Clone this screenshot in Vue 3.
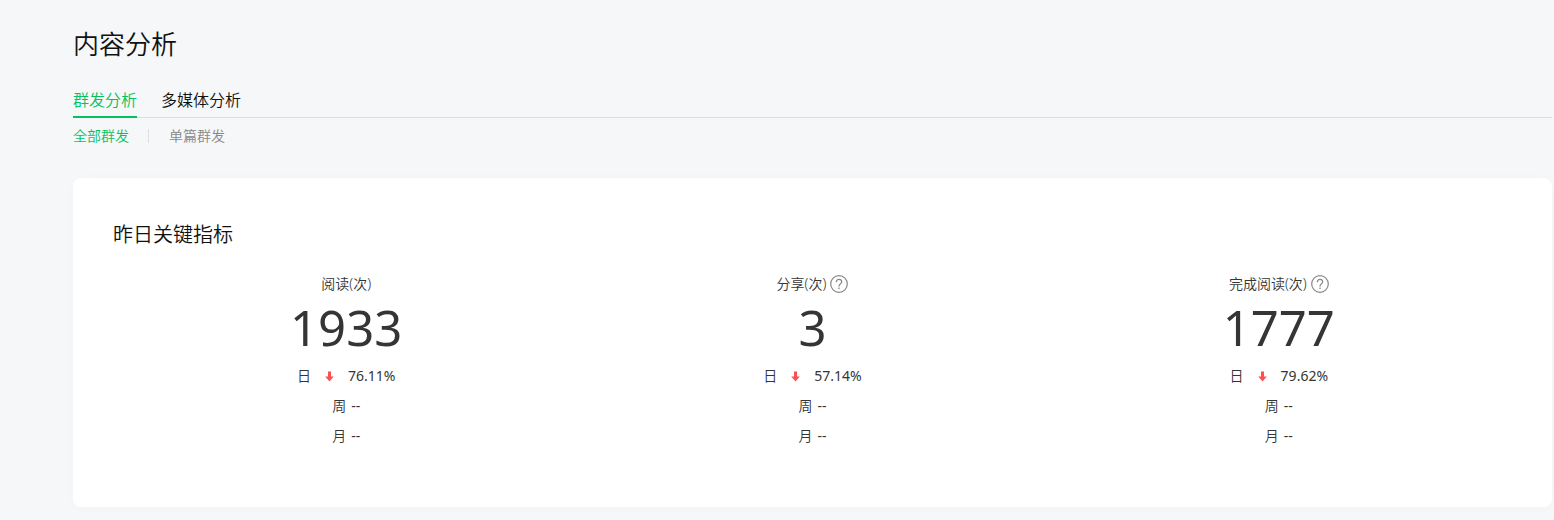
<script setup>
const tabs = [
  { label: '群发分析', active: true },
  { label: '多媒体分析', active: false },
]
const subTabs = [
  { label: '全部群发', active: true },
  { label: '单篇群发', active: false },
]
const metrics = [
  { label: '阅读(次)', value: '1933', day: '76.11%', help: false },
  { label: '分享(次)', value: '3', day: '57.14%', help: true },
  { label: '完成阅读(次)', value: '1777', day: '79.62%', help: true },
]
</script>

<template>
  <main class="page">
    <h1 class="title">内容分析</h1>
    <nav class="tabs">
      <a v-for="t in tabs" :key="t.label" href="#" class="tab" :class="{ active: t.active }">{{ t.label }}</a>
    </nav>
    <nav class="subtabs">
      <a v-for="t in subTabs" :key="t.label" href="#" class="subtab" :class="{ active: t.active }">{{ t.label }}</a>
    </nav>
    <section class="card">
      <h2 class="card-title">昨日关键指标</h2>
      <div class="metrics">
        <div v-for="m in metrics" :key="m.label" class="metric">
          <div class="label">
            <span>{{ m.label }}</span>
            <button v-if="m.help" type="button" class="help" aria-label="说明">
              <svg viewBox="0 0 18 18" width="18" height="18" fill="none" stroke="#888" aria-hidden="true">
                <circle cx="9" cy="9" r="8.3" stroke-width="1.2" />
                <path d="M6.3 7.2C6.3 5.4 7.4 4.4 9 4.4s2.7 1 2.7 2.4c0 1.1-.7 1.6-1.4 2.2C9.4 9.7 9 10.2 9 11.4" stroke-width="1.2" />
                <path d="M9 12.5v1.4" stroke-width="1.3" />
              </svg>
            </button>
          </div>
          <div class="value">{{ m.value }}</div>
          <div class="row day">
            <span>日</span>
            <svg class="arrow" viewBox="0 0 9 11" width="9" height="11" aria-hidden="true">
              <path d="M3 .5h3v5h2.8L4.5 10.5 .2 5.5H3z" fill="#fa5151" />
            </svg>
            <span class="figure">{{ m.day }}</span>
          </div>
          <div class="row"><span>周</span><span class="figure">--</span></div>
          <div class="row"><span>月</span><span class="figure">--</span></div>
        </div>
      </div>
    </section>
  </main>
</template>

<style>
body {
  margin: 0;
  background: #f5f7f9;
}
</style>

<style scoped>
.page {
  box-sizing: border-box;
  min-height: 100vh;
  padding: 24px 2px 13px 73px;
  font-family: "Noto Sans", "Noto Sans CJK SC", sans-serif;
  font-size: 14px;
  font-weight: 350;
  color: #353535;
}
.title {
  margin: 0;
  font-size: 26px;
  line-height: 40px;
  font-weight: 350;
  color: #111;
}
.tabs {
  display: flex;
  gap: 24px;
  margin-top: 20px;
  border-bottom: 1px solid #dcdee2;
}
.tab {
  margin-bottom: -1px;
  border-bottom: 2px solid transparent;
  font-size: 16px;
  line-height: 32px;
  color: #111;
  text-decoration: none;
}
.tab.active {
  color: #07c160;
  border-color: #07c160;
}
.subtabs {
  display: flex;
  align-items: center;
  margin-top: 8px;
}
.subtab {
  line-height: 20px;
  color: #888;
  text-decoration: none;
}
.subtab + .subtab {
  display: flex;
  align-items: center;
}
.subtab + .subtab::before {
  content: "";
  width: 1px;
  height: 14px;
  margin: 0 20px 0 19px;
  background: #dcdee2;
}
.subtab.active {
  color: #07c160;
}
.card {
  margin-top: 32px;
  padding: 40px 40px 56px;
  border-radius: 8px;
  background: #fff;
  box-shadow: 0 1px 12px rgba(0, 0, 0, 0.02);
}
.card-title {
  margin: 0;
  font-size: 20px;
  line-height: 34px;
  font-weight: 350;
  color: #111;
}
.metrics {
  display: grid;
  grid-template-columns: repeat(3, 1fr);
  margin-top: 22px;
}
.label {
  display: flex;
  align-items: center;
  justify-content: center;
  gap: 4px;
  line-height: 18px;
  height: 20px;
}
.help {
  display: flex;
  padding: 0;
  border: 0;
  background: none;
}
.value {
  font-size: 49px;
  font-weight: 400;
  line-height: 67px;
  text-align: center;
}
.row {
  display: flex;
  align-items: center;
  justify-content: center;
  gap: 5px;
  line-height: 30px;
}
.day {
  gap: 14px;
}
.figure {
  font-weight: 400;
}
</style>
